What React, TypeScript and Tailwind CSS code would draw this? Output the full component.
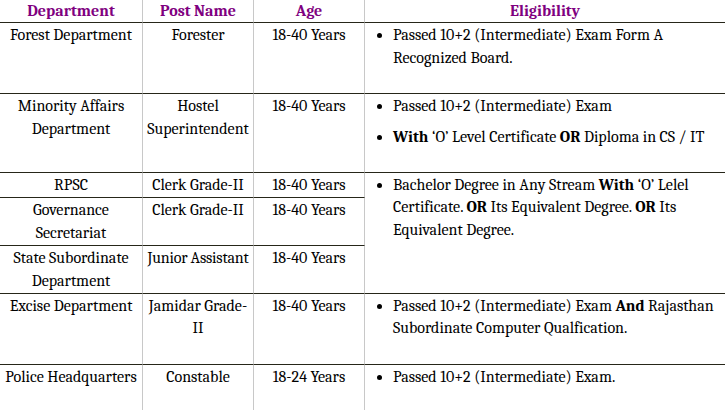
import React from "react";

const H = "border-b border-r border-b-[#262619] border-r-[#c8c8c8] px-1 pt-px pb-px align-top text-center font-serif";
const HN = "border-b border-r border-b-[#262619] border-r-[#c8c8c8] px-0 pt-px pb-px align-top text-center font-serif whitespace-nowrap tracking-[-0.2px]";
const HL = "border-b border-b-[#262619] px-1 pt-px pb-px align-top font-serif";
const TH = "border-b border-r border-b-[#262619] border-r-[#c8c8c8] px-1 py-0 text-center font-bold text-[#800080] font-serif";

function Elig({ items }: { items: React.ReactNode[] }) {
  return (
    <ul className="list-disc pl-6 pb-[15px] m-0">
      {items.map((it, i) => (
        <li key={i} className="mb-2">
          {it}
        </li>
      ))}
    </ul>
  );
}

export default function App() {
  return (
    <div className="w-[725px] h-[410px] overflow-hidden bg-white text-black font-serif">
      <table className="w-[725px] table-fixed border-separate border-spacing-0 text-[16px] leading-[22.4px] font-serif">
        <colgroup>
          <col className="w-[143px]" />
          <col className="w-[111px]" />
          <col className="w-[111px]" />
          <col className="w-[360px]" />
        </colgroup>
        <thead>
          <tr>
            <th className={TH}>Department</th>
            <th className={TH}>Post Name</th>
            <th className={TH}>Age</th>
            <th className="border-b border-b-[#262619] px-1 py-0 text-center font-bold text-[#800080] font-serif">
              Eligibility
            </th>
          </tr>
        </thead>
        <tbody>
          <tr>
            <td className={H}>Forest Department</td>
            <td className={H}>Forester</td>
            <td className={H}>18-40 Years</td>
            <td className={HL}>
              <Elig items={["Passed 10+2 (Intermediate) Exam Form A Recognized Board."]} />
            </td>
          </tr>
          <tr>
            <td className={H}>Minority Affairs Department</td>
            <td className={H}>Hostel Superintendent</td>
            <td className={H}>18-40 Years</td>
            <td className={HL}>
              <Elig
                items={[
                  "Passed 10+2 (Intermediate) Exam",
                  <>
                    <b>With</b> ‘O’ Level Certificate <b>OR</b> Diploma in CS / IT
                  </>,
                ]}
              />
            </td>
          </tr>
          <tr>
            <td className={H}>RPSC</td>
            <td className={H}>Clerk Grade-II</td>
            <td className={H}>18-40 Years</td>
            <td className={HL} rowSpan={3}>
              <Elig
                items={[
                  <>
                    Bachelor Degree in Any Stream <b>With</b> ‘O’ Lelel Certificate. <b>OR</b> Its Equivalent Degree.{" "}
                    <b>OR</b> Its Equivalent Degree.
                  </>,
                ]}
              />
            </td>
          </tr>
          <tr>
            <td className={H}>Governance Secretariat</td>
            <td className={H}>Clerk Grade-II</td>
            <td className={H}>18-40 Years</td>
          </tr>
          <tr>
            <td className={H}>State Subordinate Department</td>
            <td className={HN}>Junior Assistant</td>
            <td className={H}>18-40 Years</td>
          </tr>
          <tr>
            <td className={H}>Excise Department</td>
            <td className={H}>
              Jamidar Grade-
              <br />
              II
            </td>
            <td className={H}>18-40 Years</td>
            <td className={HL}>
              <Elig
                items={[
                  <>
                    Passed 10+2 (Intermediate) Exam <b>And</b> Rajasthan Subordinate Computer Qualfication.
                  </>,
                ]}
              />
            </td>
          </tr>
          <tr>
            <td className={H}>Police Headquarters</td>
            <td className={H}>Constable</td>
            <td className={H}>18-24 Years</td>
            <td className={HL}>
              <Elig items={["Passed 10+2 (Intermediate) Exam."]} />
            </td>
          </tr>
        </tbody>
      </table>
    </div>
  );
}
